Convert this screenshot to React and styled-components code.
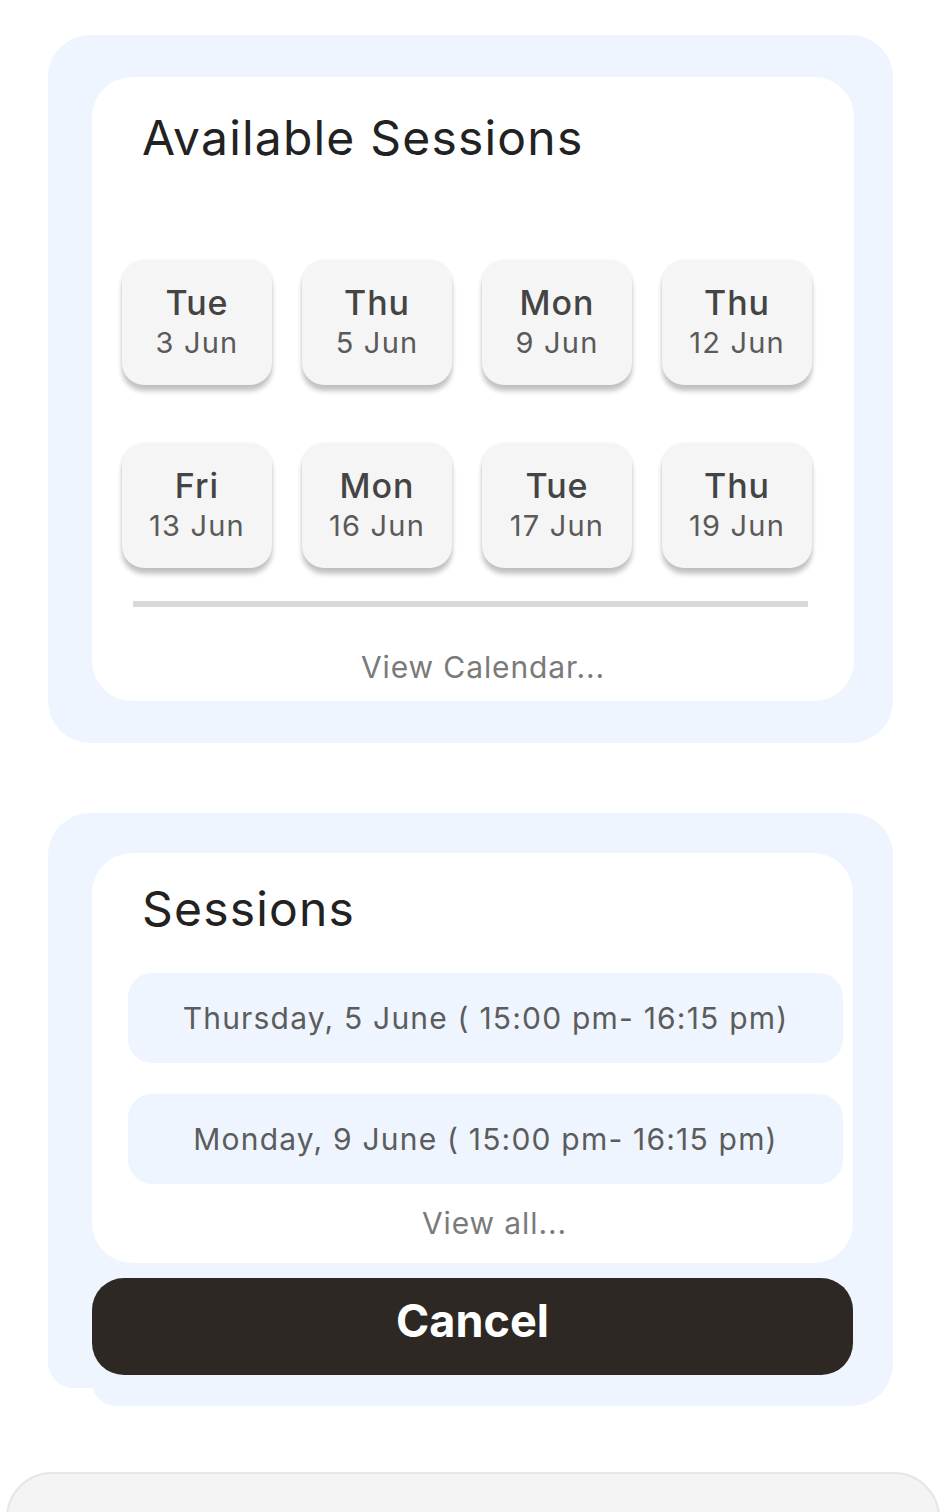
import React from "react";
import styled, { createGlobalStyle } from "styled-components";

const GlobalStyle = createGlobalStyle`
  body {
    margin: 0;
    background: #ffffff;
    font-family: Inter, "Noto Sans", sans-serif;
  }
`;

const Page = styled.div`
  display: flex;
  flex-direction: column;
  padding-top: 35px;
`;

const Panel = styled.section`
  width: 845px;
  box-sizing: border-box;
  margin-left: 48px;
  background: #eef5fe;
  border-radius: 42px;
  padding: 42px 39px 42px 44px;
`;

const SessionsPanel = styled(Panel)`
  margin-top: 70px;
  padding: 40px 40px 13px 44px;
  border-radius: 42px 42px 42px 26px;
`;

const Card = styled.div`
  background: #ffffff;
  border-radius: 40px;
  display: flex;
  flex-direction: column;
`;

const Title = styled.h1`
  margin: 0;
  padding: ${(p) => p.$top}px 0 0 50px;
  font-size: 48px;
  line-height: 58px;
  font-weight: 400;
  letter-spacing: 1.2px;
  color: #222222;
`;

const DateGrid = styled.div`
  display: grid;
  grid-template-columns: repeat(4, 150px);
  column-gap: 30px;
  row-gap: 58px;
  margin: 93px 0 0 30px;
`;

const DateTile = styled.button`
  height: 125px;
  border: none;
  border-radius: 22px;
  background: #f5f5f5;
  box-shadow: 0 6px 5px rgba(0, 0, 0, 0.24), 0 0 3px rgba(0, 0, 0, 0.06);
  display: flex;
  flex-direction: column;
  align-items: center;
  justify-content: center;
  font-family: inherit;
  padding: 0;
`;

const Day = styled.span`
  font-size: 34px;
  line-height: 40px;
  font-weight: 500;
  letter-spacing: 1px;
  color: #444444;
`;

const DateText = styled.span`
  font-size: 29px;
  line-height: 40px;
  font-weight: 400;
  letter-spacing: 1.2px;
  color: #5a5a5a;
`;

const Divider = styled.hr`
  margin: 33px 0 0 41px;
  width: 675px;
  height: 6px;
  border: none;
  background: #d9d9d9;
`;

const MoreLink = styled.a`
  align-self: center;
  margin: ${(p) => p.$top}px 0 ${(p) => p.$bottom}px ${(p) => p.$shift}px;
  font-size: 30px;
  line-height: 36px;
  letter-spacing: 0.9px;
  color: #7a7a7a;
  text-decoration: none;
`;

const SessionList = styled.div`
  display: flex;
  flex-direction: column;
  gap: 31px;
  margin: 35px 0 0 36px;
  width: 715px;
`;

const SessionRow = styled.div`
  height: 90px;
  border-radius: 24px;
  background: #eef5fe;
  display: flex;
  align-items: center;
  justify-content: center;
  font-size: 30px;
  font-weight: 400;
  letter-spacing: 1.2px;
  color: #5c5c5c;
`;

const ButtonDock = styled.div`
  background: #eef5fe;
  margin: 0 -40px -31px 0;
  padding: 15px 40px 31px 0;
  border-radius: 0 0 42px 24px;
`;

const CancelButton = styled.button`
  width: 100%;
  height: 97px;
  border: none;
  border-radius: 32px;
  background: #2d2823;
  color: #ffffff;
  font-family: inherit;
  font-size: 45px;
  font-weight: 700;
  padding: 0 0 12px;
`;

const BottomCard = styled.div`
  margin: 84px 8px 0 6px;
  height: 200px;
  background: #f4f4f4;
  border: 2px solid #e6e6e6;
  border-radius: 46px;
`;

const dates = [
  ["Tue", "3 Jun"],
  ["Thu", "5 Jun"],
  ["Mon", "9 Jun"],
  ["Thu", "12 Jun"],
  ["Fri", "13 Jun"],
  ["Mon", "16 Jun"],
  ["Tue", "17 Jun"],
  ["Thu", "19 Jun"],
];

const sessions = [
  "Thursday, 5 June ( 15:00 pm- 16:15 pm)",
  "Monday, 9 June ( 15:00 pm- 16:15 pm)",
];

export default function App() {
  return (
    <Page>
      <GlobalStyle />
      <Panel>
        <Card>
          <Title $top={32}>Available Sessions</Title>
          <DateGrid>
            {dates.map(([day, date]) => (
              <DateTile key={day + date}>
                <Day>{day}</Day>
                <DateText>{date}</DateText>
              </DateTile>
            ))}
          </DateGrid>
          <Divider />
          <MoreLink href="#" $top={42} $bottom={16} $shift={20}>
            View Calendar...
          </MoreLink>
        </Card>
      </Panel>

      <SessionsPanel>
        <Card>
          <Title $top={27}>Sessions</Title>
          <SessionList>
            {sessions.map((s) => (
              <SessionRow key={s}>{s}</SessionRow>
            ))}
          </SessionList>
          <MoreLink href="#" $top={21} $bottom={22} $shift={44}>
            View all...
          </MoreLink>
        </Card>
        <ButtonDock>
          <CancelButton>Cancel</CancelButton>
        </ButtonDock>
      </SessionsPanel>

      <BottomCard />
    </Page>
  );
}
